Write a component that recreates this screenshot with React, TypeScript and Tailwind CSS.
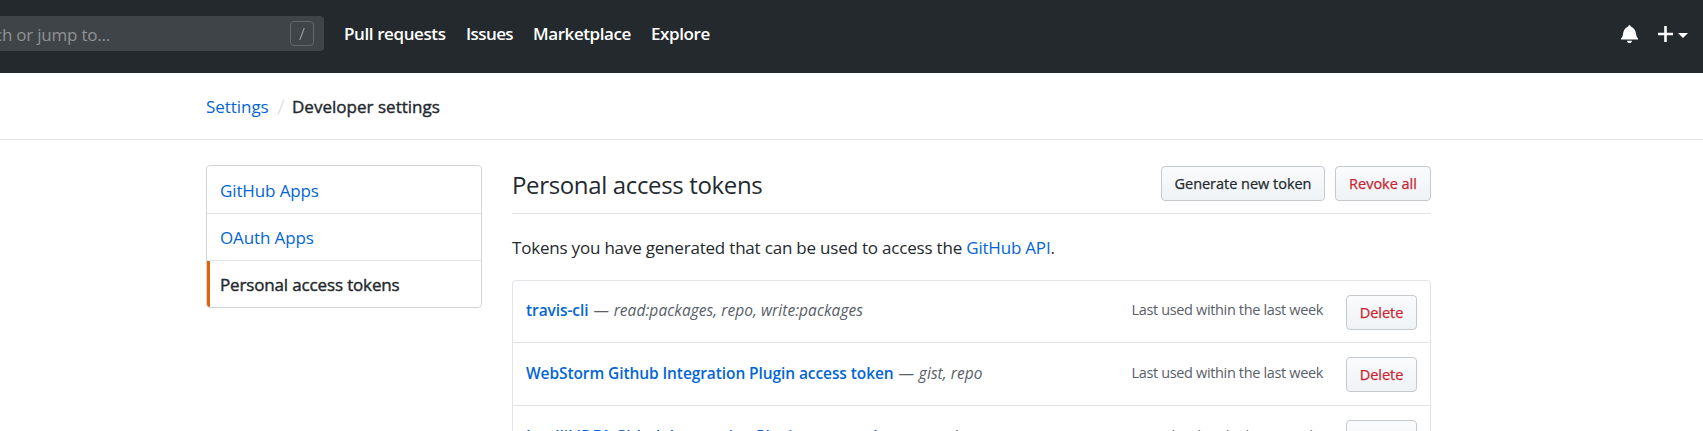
import React from 'react';

const tokens = [
  { name: 'travis-cli', scopes: 'read:packages, repo, write:packages', used: 'Last used within the last week', row: 'h-[62px]', pad: 'pt-[17px]', usedPad: 'pt-[17px]' },
  { name: 'WebStorm Github Integration Plugin access token', scopes: 'gist, repo', used: 'Last used within the last week', row: 'h-[63px]', pad: 'pt-[18px]', usedPad: 'pt-[18px]' },
  { name: 'IntelliJ IDEA Github Integration Plugin access token', scopes: 'read:org, repo', used: 'Last used within the last 2 weeks', row: 'h-[63px]', pad: 'pt-[18px]', usedPad: 'pt-[18px]' },
];

function Btn({ children, cls }: { children: React.ReactNode; cls: string }) {
  return (
    <button className={`h-[35px] shrink-0 whitespace-nowrap rounded-[4px] border border-[#c5c9cd] bg-linear-to-b from-[#fafbfc] to-[#eff3f6] text-center text-[14.5px] leading-[33px] tracking-[-0.02px] [-webkit-text-stroke:0.25px] ${cls}`}>
      {children}
    </button>
  );
}

export default function App() {
  return (
    <div className="h-[431px] w-[1703px] overflow-hidden bg-white font-['Open_Sans','Noto_Sans',sans-serif] text-[17px] tracking-[-0.22px] text-[#24292e]">
      <header className="flex h-[73px] items-start bg-[#24292e] pt-4">
        <div className="flex h-[35px] w-[324px] items-center justify-between rounded-r-[4px] bg-[#3f4448] pr-[10px] text-[#8f9294]">
          <span className="-ml-[6px] whitespace-nowrap pt-[2px]">ch or jump to...</span>
          <span className="flex h-[25px] w-6 items-center justify-center rounded-[4px] border border-[#64686b]">
            <svg width="8" height="14" viewBox="0 0 8 14" stroke="#9a9d9f" strokeWidth="1.1"><path d="M6.3 1 1.7 13" /></svg>
          </span>
        </div>
        <nav className="ml-5 flex h-[35px] items-center gap-5 whitespace-nowrap font-semibold text-white">
          <span className="w-[102px] tracking-[-0.4px]">Pull requests</span>
          <span className="w-[47px] tracking-[-0.6px]">Issues</span>
          <span className="w-[98px] tracking-[-0.43px]">Marketplace</span>
          <span className="w-[60px] tracking-[-0.4px]">Explore</span>
        </nav>
        <div className="ml-auto flex h-[35px] items-center pr-[15px] text-white">
          <svg width="17" height="19" viewBox="0 0 14 16" preserveAspectRatio="none" fill="currentColor"><path d="M14 12v1H0v-1l.73-.58c.77-.77.81-2.55 1.190-4.42C2.690 3.230 6 2 6 2c0-.55.45-1 1-1s1 .45 1 1c0 0 3.390 1.230 4.160 5 .38 1.880.42 3.660 1.190 4.420l.66.58H14zm-7 4c1.110 0 2-.89 2-2H5c0 1.110.89 2 2 2z" /></svg>
          <svg className="ml-5" width="15" height="16" viewBox="0 0 15 16" fill="currentColor"><path d="M6.200 0h2.600v6.700H15v2.600H8.800V16H6.200V9.300H0V6.700h6.200z" /></svg>
          <svg className="ml-[5px] mt-[3px]" width="10" height="5" viewBox="0 0 10 5" fill="currentColor"><path d="M0 0h10L5 5z" /></svg>
        </div>
      </header>
      <div className="flex h-[67px] items-center whitespace-nowrap border-b border-[#e1e4e8] pl-[206px]">
        <span className="w-[62px] pt-[2px] tracking-[-0.05px] text-[#0366d6]">Settings</span>
        <svg className="ml-[9px] mr-[7px] mt-[2px]" width="8" height="16" viewBox="0 0 8 16" stroke="#dfe2e5" strokeWidth="1.6"><path d="M7 .5 1 15.500" /></svg>
        <span className="pt-[2px] tracking-[0.02px] [-webkit-text-stroke:0.4px]">Developer settings</span>
      </div>
      <main className="flex pl-[206px] pt-[25px]">
        <nav className="h-[143px] w-[276px] shrink-0 overflow-hidden rounded-[4px] border border-[#d1d5da]">
          <div className="h-12 border-b border-[#e1e4e8] pl-[13px] leading-[49px] tracking-[-0.12px] text-[#0366d6]">GitHub Apps</div>
          <div className="h-[47px] border-b border-[#e1e4e8] pl-[13px] leading-[47px] tracking-[-0.12px] text-[#0366d6]">OAuth Apps</div>
          <div className="h-[46px] border-l-[3px] border-[#e36209] pl-[10px] leading-[47px] tracking-[-0.15px] [-webkit-text-stroke:0.4px]">Personal access tokens</div>
        </nav>
        <section className="ml-[30px] w-[919px]">
          <div className="flex h-[49px] items-start border-b border-[#e1e4e8]">
            <h2 className="mr-auto text-[24px] leading-10 tracking-[-0.35px]">Personal access tokens</h2>
            <div className="flex gap-[10px] pt-px">
              <Btn cls="w-[164px]">Generate new token</Btn>
              <Btn cls="w-24 text-[#cb2431]">Revoke all</Btn>
            </div>
          </div>
          <p className="h-[66px] whitespace-nowrap pt-[21px] leading-[26px] tracking-[-0.2px]">Tokens you have generated that can be used to access the <span className="text-[#0366d6]">GitHub API</span>.</p>
          <div className="h-[200px] rounded-t-[4px] border border-[#e1e4e8]">
            {tokens.map((t) => (
              <div key={t.name} className={`flex items-start whitespace-nowrap border-b border-[#e1e4e8] px-[13px] text-[15.5px] leading-6 ${t.row}`}>
                <span className={`mr-auto flex ${t.pad}`}>
                  <b className="font-semibold tracking-[-0.09px] text-[#0366d6]">{t.name}</b>
                  <span className="ml-[5px] text-[#586069]">—</span>
                  <i className="ml-[5px] tracking-[0.05px] text-[#586069]">{t.scopes}</i>
                </span>
                <span className={`mr-[23px] text-[14.5px] tracking-[-0.35px] text-[#586069] ${t.usedPad}`}>{t.used}</span>
                <span className="flex pt-[14px]"><Btn cls="w-[71px] text-[#cb2431]">Delete</Btn></span>
              </div>
            ))}
          </div>
        </section>
      </main>
    </div>
  );
}
